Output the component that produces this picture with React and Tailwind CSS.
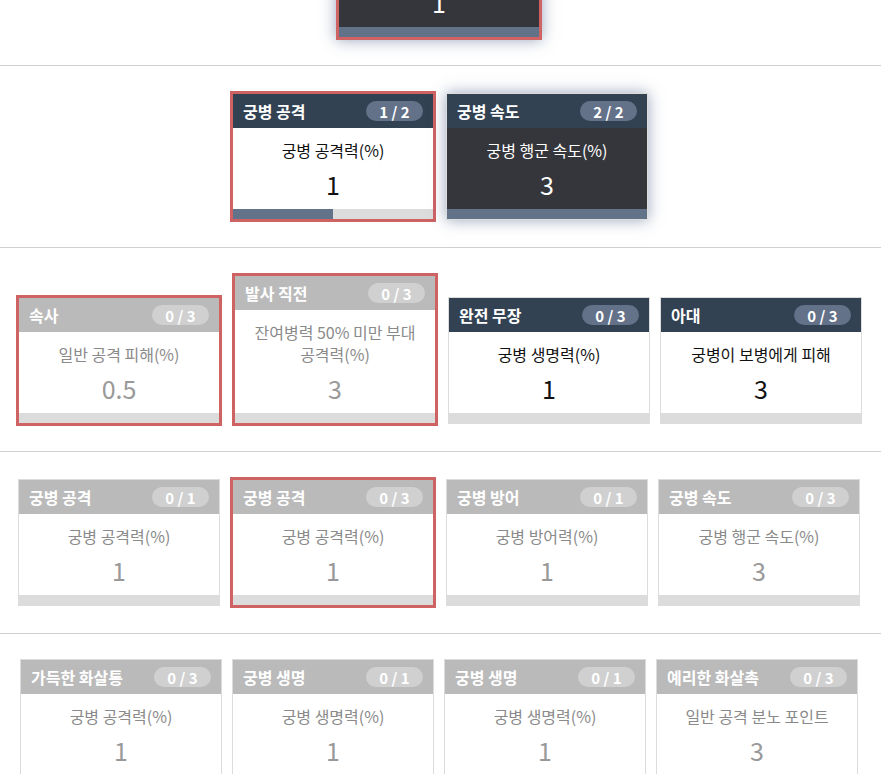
import React from "react";

const FONT = { fontFamily: '"Noto Sans CJK KR", "Noto Sans", sans-serif' };

function Card({ title, badge, label, value, state = "locked", red = false, fill = 0 }) {
  const locked = state === "locked";
  const max = state === "max";
  const outer = red
    ? "w-[206px] border-[3px] border-[#cf6262]"
    : "w-[202px] border border-[#dcdcdc] mb-[2px]";
  return (
    <div
      className={
        "flex flex-col shrink-0 " +
        outer +
        (max ? " shadow-[0_0_14px_rgba(70,90,130,0.55)]" : "")
      }
    >
      <div
        className={
          "h-[34px] px-[10px] flex items-center justify-between " +
          (locked ? "bg-[#bababa]" : "bg-[#324253]")
        }
      >
        <span className="text-white font-bold text-[16px] leading-none">{title}</span>
        <span
          className={
            "w-[57px] h-[20px] rounded-full flex items-center justify-center text-white font-bold text-[15px] leading-none " +
            (locked ? "bg-[#d0d0d0]" : "bg-[#637189]")
          }
        >
          {badge}
        </span>
      </div>
      <div
        className={
          "pt-[11px] pb-[8px] px-[8px] text-center " + (max ? "bg-[#35363c]" : "bg-white")
        }
      >
        <div
          className={
            "text-[16px] leading-[22px] break-keep " +
            (locked ? "text-[#8a8a8a]" : max ? "text-white" : "text-[#111]")
          }
        >
          {label}
        </div>
        <div
          className={
            "mt-[6px] text-[25px] leading-[34px] " +
            (locked ? "text-[#999]" : max ? "text-white" : "text-[#111]")
          }
        >
          {value}
        </div>
      </div>
      <div className="h-[10px] bg-[#dcdcdc] flex">
        <div className="h-full bg-[#627289]" style={{ width: `${fill}%` }} />
      </div>
    </div>
  );
}

function Row({ children, className = "" }) {
  return (
    <div className={"border-b border-[#d0d0d0] pt-[25px] pb-[25px] " + className}>
      <div className="w-[878px] flex justify-center items-end gap-[10px]">{children}</div>
    </div>
  );
}

export default function App() {
  return (
    <div className="w-[881px] bg-white overflow-hidden" style={FONT}>
      <Row className="-mt-[116px]">
        <Card title="궁병 특화" badge="1 / 1" label="궁병 공격력(%)" value="1" state="max" red fill={100} />
      </Row>
      <Row>
        <Card title="궁병 공격" badge="1 / 2" label="궁병 공격력(%)" value="1" state="open" red fill={50} />
        <Card title="궁병 속도" badge="2 / 2" label="궁병 행군 속도(%)" value="3" state="max" fill={100} />
      </Row>
      <Row>
        <Card title="속사" badge="0 / 3" label="일반 공격 피해(%)" value="0.5" red />
        <Card title="발사 직전" badge="0 / 3" label="잔여병력 50% 미만 부대 공격력(%)" value="3" red />
        <Card title="완전 무장" badge="0 / 3" label="궁병 생명력(%)" value="1" state="open" />
        <Card title="아대" badge="0 / 3" label="궁병이 보병에게 피해" value="3" state="open" />
      </Row>
      <Row>
        <Card title="궁병 공격" badge="0 / 1" label="궁병 공격력(%)" value="1" />
        <Card title="궁병 공격" badge="0 / 3" label="궁병 공격력(%)" value="1" red />
        <Card title="궁병 방어" badge="0 / 1" label="궁병 방어력(%)" value="1" />
        <Card title="궁병 속도" badge="0 / 3" label="궁병 행군 속도(%)" value="3" />
      </Row>
      <Row>
        <Card title="가득한 화살통" badge="0 / 3" label="궁병 공격력(%)" value="1" />
        <Card title="궁병 생명" badge="0 / 1" label="궁병 생명력(%)" value="1" />
        <Card title="궁병 생명" badge="0 / 1" label="궁병 생명력(%)" value="1" />
        <Card title="예리한 화살촉" badge="0 / 3" label="일반 공격 분노 포인트" value="3" />
      </Row>
    </div>
  );
}
